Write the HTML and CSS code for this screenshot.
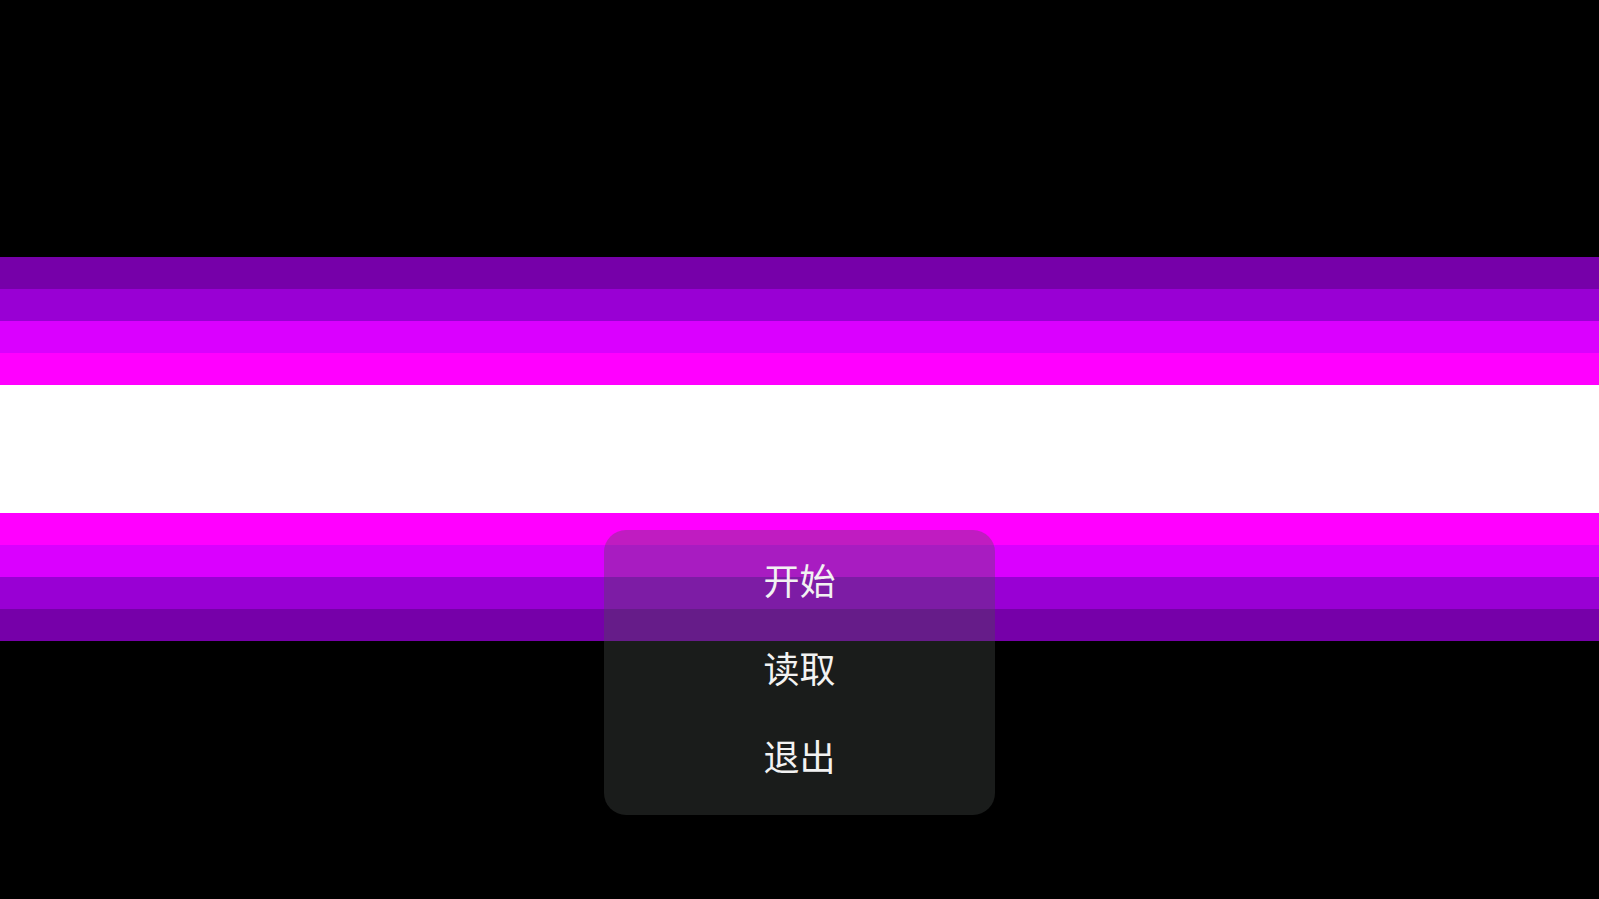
FILE: index.html
```html
<!DOCTYPE html>
<html lang="zh-CN">
<head>
<meta charset="utf-8">
<title>Menu</title>
<link rel="stylesheet" href="styles.css">
</head>
<body>
<div class="screen">
  <div class="flag">
    <div class="band b1"></div>
    <div class="band b2"></div>
    <div class="band b3"></div>
    <div class="band b4"></div>
    <div class="band white"></div>
    <div class="band b4"></div>
    <div class="band b3"></div>
    <div class="band b2"></div>
    <div class="band b1"></div>
  </div>
  <div class="menu">
    <div class="item">开始</div>
    <div class="item">读取</div>
    <div class="item">退出</div>
  </div>
</div>
</body>
</html>
```

FILE: styles.css
```css
html, body {
  margin: 0;
  padding: 0;
  background: #000;
  width: 100%;
  height: 100%;
  overflow: hidden;
}

.screen {
  position: relative;
  width: 1599px;
  height: 899px;
  background: #000;
  display: flex;
  flex-direction: column;
  padding-top: 257px;
  box-sizing: border-box;
}

.flag {
  display: flex;
  flex-direction: column;
}

.band {
  height: 32px;
}

.b1 { background: #7600a9; }
.b2 { background: #9900d4; }
.b3 { background: #da00ff; }
.b4 { background: #ff00ff; }
.white { height: 128px; background: #ffffff; }

.menu {
  position: absolute;
  left: 604px;
  top: 530px;
  width: 391px;
  height: 285px;
  box-sizing: border-box;
  padding-top: 5px;
  border-radius: 22px;
  background: rgba(74, 80, 77, 0.35);
  display: flex;
  flex-direction: column;
  align-items: center;
}

.item {
  height: 88px;
  display: flex;
  align-items: center;
  justify-content: center;
  font-family: "Noto Sans CJK SC", "Noto Sans", sans-serif;
  font-size: 36px;
  color: #f2f2f2;
  letter-spacing: 0;
}
```
